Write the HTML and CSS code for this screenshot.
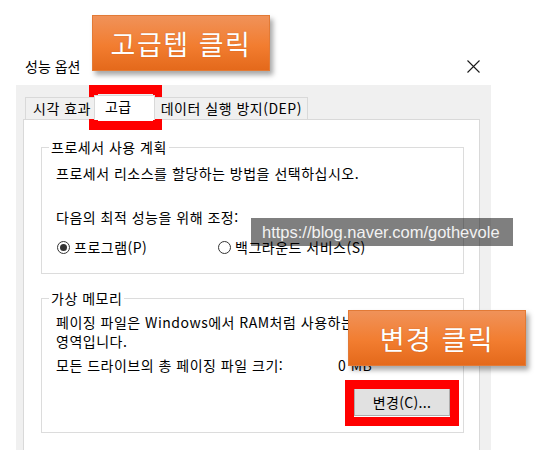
FILE: index.html
```html
<!DOCTYPE html>
<html lang="ko">
<head>
    <meta charset="UTF-8">
    <meta name="viewport" content="width=device-width, initial-scale=1.0">
    <title>성능 옵션</title>
    <link rel="stylesheet" href="styles.css">
</head>
<body>
<div class="page">
    <div class="dialog">
        <div class="titlebar">
            <span class="title">성능 옵션</span>
            <svg class="close" width="13" height="13" viewBox="0 0 13 13">
                <path d="M0.5 0.5L12.5 12.5M12.5 0.5L0.5 12.5" stroke="#1a1a1a" stroke-width="1.1" fill="none"/>
            </svg>
        </div>
        <div class="body">
            <div class="tabs">
                <span class="tab first">시각 효과</span>
                <span class="tab active">고급</span>
                <span class="tab">데이터 실행 방지(DEP)</span>
            </div>
            <div class="panel">
                <div class="group">
                    <span class="group-title">프로세서 사용 계획</span>
                    <p class="line first-line">프로세서 리소스를 할당하는 방법을 선택하십시오.</p>
                    <p class="line adjust">다음의 최적 성능을 위해 조정:</p>
                    <div class="radios">
                        <label class="radio checked"><span class="dot"></span>프로그램(P)</label>
                        <label class="radio"><span class="dot"></span>백그라운드 서비스(S)</label>
                    </div>
                </div>
                <div class="group vm">
                    <span class="group-title">가상 메모리</span>
                    <p class="desc">페이징 파일은 Windows에서 RAM처럼 사용하는 하드 디스크<br>영역입니다.</p>
                    <div class="size-row">
                        <span class="size-label">모든 드라이브의 총 페이징 파일 크기:</span>
                        <span class="size-value">0 MB</span>
                    </div>
                    <div class="btn-row">
                        <button class="btn">변경(C)...</button>
                    </div>
                </div>
            </div>
        </div>
    </div>

    <!-- 설명용 표시 -->
    <div class="mark mark-tab"></div>
    <div class="mark mark-btn"></div>
    <div class="callout callout-tab">고급텝 클릭</div>
    <div class="callout callout-btn">변경 클릭</div>
    <div class="watermark">https://blog.naver.com/gothevole</div>
</div>
</body>
</html>
```

FILE: styles.css
```css
body {
    margin: 0;
    background: #fff;
    font-family: "Noto Sans CJK KR", sans-serif;
    font-size: 14px;
    color: #000;
}
.page {
    position: relative;
    width: 539px;
    height: 464px;
    overflow: hidden;
}
.dialog {
    margin-left: 16px;
    width: 475px;
}
.titlebar {
    height: 85px;
    box-sizing: border-box;
    display: flex;
    align-items: flex-end;
    justify-content: space-between;
    padding: 0 11px 9px 9px;
}
.title {
    line-height: 20px;
}
.close {
    margin-bottom: 3px;
}

.body {
    background: #f0f0f0;
    height: 365px;
    box-sizing: border-box;
    padding: 12px 11px 0 7px;
    overflow: hidden;
    letter-spacing: 0.5px;
}
.tabs {
    display: flex;
    align-items: flex-end;
    height: 22px;
    padding-left: 2px;
    position: relative;
    z-index: 1;
}
.tab {
    height: 22px;
    box-sizing: border-box;
    line-height: 21px;
    padding: 0 5px 0 7px;
    border: 1px solid #d9d9d9;
    border-bottom: none;
    margin-right: -1px;
    background: #f0f0f0;
}
.tab.active {
    height: 25px;
    margin: 0 -2px -1px -2px;
    padding: 0 22px 2px 10px;
    background: #fff;
    position: relative;
}
.panel {
    background: #fff;
    border: 1px solid #d9d9d9;
    height: 400px;
    padding-top: 27px;
    box-sizing: border-box;
}

.group {
    border: 1px solid #dcdcdc;
    margin: 0 15px 0 17px;
    padding: 0 0 16px 14px;
}
.group-title {
    display: table;
    line-height: 20px;
    margin: -11px 0 0 -7px;
    padding: 0 2px;
    background: #fff;
}
.line {
    margin: 0;
    line-height: 20px;
}
.first-line {
    margin-top: 6px;
}
.adjust {
    margin-top: 24px;
}
.radios {
    display: flex;
    margin-top: 10px;
    line-height: 20px;
}
.radio {
    display: flex;
    align-items: center;
}
.radio:first-child {
    width: 161px;
    margin-left: 1px;
}
.dot {
    width: 13px;
    height: 13px;
    box-sizing: border-box;
    border: 1px solid #333;
    border-radius: 50%;
    margin-right: 4px;
    display: flex;
    align-items: center;
    justify-content: center;
}
.checked .dot::after {
    content: "";
    width: 7px;
    height: 7px;
    border-radius: 50%;
    background: #333;
}

.vm {
    margin-top: 24px;
}
.desc {
    margin: 5px 0 0;
    line-height: 19px;
    white-space: nowrap;
}
.size-row {
    display: flex;
    margin-top: 4px;
    line-height: 20px;
}
.size-label {
    width: 282px;
}
.btn-row {
    display: flex;
    justify-content: flex-end;
    margin-top: 12px;
}
.btn {
    width: 96px;
    height: 29px;
    margin-right: 13px;
    border: 1px solid #adadad;
    background: #e1e1e1;
    font-family: inherit;
    font-size: 14px;
    letter-spacing: 0.3px;
    color: #000;
    padding: 0;
}

.mark {
    position: absolute;
    border: 9px solid #ff0000;
    box-sizing: border-box;
}
.mark-tab {
    left: 89px;
    top: 85px;
    width: 73px;
    height: 45px;
}
.mark-btn {
    left: 345px;
    top: 380px;
    width: 114px;
    height: 46px;
}
.callout {
    position: absolute;
    width: 178px;
    height: 56px;
    box-sizing: border-box;
    display: flex;
    align-items: center;
    justify-content: center;
    color: #fff;
    font-size: 27px;
    letter-spacing: 1.5px;
    background: linear-gradient(#f09259, #f27d30 55%, #e4691b);
    border: 1px solid #e27a36;
    box-shadow: 3px 4px 5px rgba(0, 0, 0, 0.35);
    text-shadow: 0 0 1px rgba(120, 50, 0, 0.5);
}
.callout-tab {
    left: 92px;
    top: 15px;
}
.callout-btn {
    left: 348px;
    top: 310px;
}
.watermark {
    position: absolute;
    left: 251px;
    top: 218px;
    width: 262px;
    height: 28px;
    box-sizing: border-box;
    padding-left: 11px;
    line-height: 28px;
    background: rgba(0, 0, 0, 0.5);
    color: #f2f2f2;
    font-family: "Liberation Sans", sans-serif;
    font-size: 16.5px;
    white-space: nowrap;
}
```
